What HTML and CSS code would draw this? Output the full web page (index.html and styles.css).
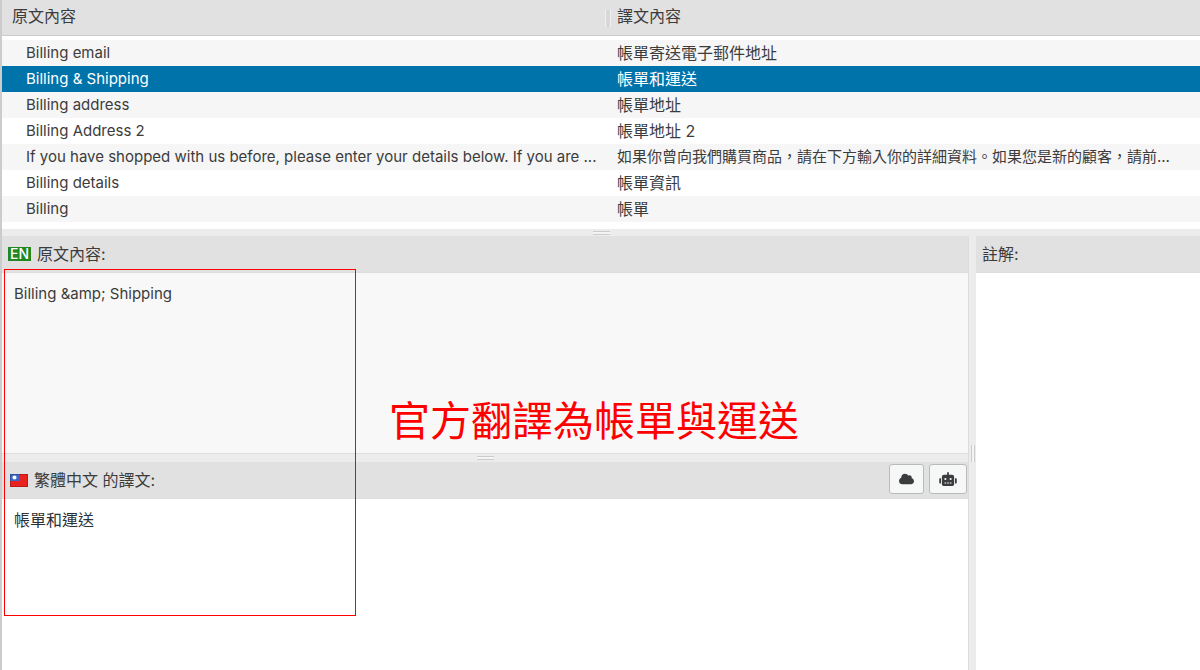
FILE: index.html
```html
<!DOCTYPE html>
<html lang="zh-Hant">
<head>
    <meta charset="utf-8">
    <title>Billing &amp; Shipping</title>
    <link rel="stylesheet" href="styles.css">
</head>
<body>
    <div class="editor">
        <table class="strings">
            <thead>
                <tr><th class="col-source">原文內容</th><th class="col-target">譯文內容</th></tr>
            </thead>
            <tbody>
                <tr><td>Billing email</td><td>帳單寄送電子郵件地址</td></tr>
                <tr class="selected"><td>Billing &amp; Shipping</td><td>帳單和運送</td></tr>
                <tr><td>Billing address</td><td>帳單地址</td></tr>
                <tr><td>Billing Address 2</td><td>帳單地址 2</td></tr>
                <tr class="long"><td>If you have shopped with us before, please enter your details below. If you are ...</td><td>如果你曾向我們購買商品，請在下方輸入你的詳細資料。如果您是新的顧客，請前...</td></tr>
                <tr><td>Billing details</td><td>帳單資訊</td></tr>
                <tr><td>Billing</td><td>帳單</td></tr>
            </tbody>
        </table>

        <div class="split-h"><span class="grip"></span></div>

        <div class="panes">
            <div class="left">
                <div class="panel source">
                    <div class="bar">
                        <span class="lang">EN</span>
                        <label for="source">原文內容:</label>
                    </div>
                    <textarea id="source" readonly>Billing &amp;amp; Shipping</textarea>
                </div>
                <div class="split-h split-inner"><span class="grip"></span></div>
                <div class="panel">
                    <div class="bar bar-target">
                        <svg class="flag" viewBox="0 0 18 13" width="18" height="13">
                            <rect width="18" height="13" fill="#e8221f"/>
                            <rect width="9" height="7" fill="#3f66c8"/>
                            <circle cx="4.5" cy="3.5" r="2" fill="#fff"/>
                            <rect x=".5" y=".5" width="17" height="12" fill="none" stroke="#000" stroke-opacity=".2"/>
                        </svg>
                        <label for="target">繁體中文 的譯文:</label>
                        <div class="tools">
                            <button type="button" aria-label="Sync">
                                <svg viewBox="0 0 640 512" width="15" height="12"><path d="M537.6 226.6c4.1-10.7 6.4-22.4 6.4-34.6 0-53-43-96-96-96-19.7 0-38.1 6-53.3 16.2C367 64.2 315.3 32 256 32c-88.4 0-160 71.6-160 160 0 2.7.1 5.4.2 8.1C40.2 219.8 0 273.2 0 336c0 79.5 64.5 144 144 144h368c70.7 0 128-57.3 128-128 0-61.9-44-113.6-102.4-125.4z"/></svg>
                            </button>
                            <button type="button" aria-label="Auto">
                                <svg viewBox="0 0 640 512" width="18" height="14"><path d="M32 224H64V416H32A32 32 0 0 1 0 384V256A32 32 0 0 1 32 224Zm512-48V448a64 64 0 0 1-64 64H160a64 64 0 0 1-64-64V176a80 80 0 0 1 80-80H288V32a32 32 0 0 1 64 0V96H464A80 80 0 0 1 544 176ZM264 256a40 40 0 1 0-40 40A40 40 0 0 0 264 256Zm-8 128H192v32h64Zm96 0H288v32h64ZM456 256a40 40 0 1 0-40 40A40 40 0 0 0 456 256Zm-8 128H384v32h64ZM640 256V384a32 32 0 0 1-32 32H576V224h32A32 32 0 0 1 640 256Z"/></svg>
                            </button>
                        </div>
                    </div>
                    <textarea id="target">帳單和運送</textarea>
                </div>
            </div>
            <div class="split-v"><span class="grip"></span></div>
            <div class="panel notes">
                <div class="bar"><label for="notes">註解:</label></div>
                <textarea id="notes"></textarea>
            </div>

            <div class="mark"></div>
            <p class="remark">官方翻譯為帳單與運送</p>
        </div>
    </div>
</body>
</html>
```

FILE: styles.css
```css
* {
    box-sizing: border-box;
}
body {
    margin: 0;
    font: 16px/26px Inter, "Noto Sans CJK TC", sans-serif;
    color: #3c3c3c;
}
.editor {
    display: flex;
    flex-direction: column;
    height: 100vh;
    border-left: 2px solid #ccc;
    background: #fff;
}

/* string list */
.strings {
    width: 100%;
    table-layout: fixed;
    border-collapse: separate;
    border-spacing: 0;
    margin-bottom: 7px;
}
.strings th {
    height: 36px;
    padding: 0 0 4px 10px;
    background: #e1e1e1;
    border-bottom: 1px solid #ccc;
    font-weight: 400;
    text-align: left;
    line-height: 30px;
}
.strings .col-source {
    width: 51%;
}
.strings .col-target {
    padding-left: 4px;
}
.strings .col-target::before {
    content: "";
    float: left;
    width: 4px;
    height: 17px;
    margin: 9px 0 0 -12px;
    border: solid #f0f0f0;
    border-width: 0 1px;
    background: #d8d8d8;
}
.strings tbody::before {
    content: "";
    display: block;
    height: 4px;
}
.strings td {
    height: 26px;
    padding: 0 4px;
    overflow: hidden;
    white-space: nowrap;
    line-height: 26px;
}
.strings td:first-child {
    padding: 0 0 0 24px;
    font-size: 15px;
}
.strings .long td {
    font-size: 15px;
}
.strings tbody tr:nth-child(odd) {
    background: #f6f6f6;
}
.strings tbody tr.selected {
    background: #0073aa;
    color: #fff;
}

/* splitters */
.split-h,
.split-v {
    display: flex;
    flex: none;
    align-items: center;
    justify-content: center;
    background: #ececec;
}
.split-h {
    height: 7px;
}
.split-inner {
    height: 9px;
    border-top: 1px solid #ddd;
}
.split-v {
    width: 8px;
    border-left: 1px solid #ddd;
}
.split-h .grip {
    width: 17px;
    height: 4px;
    border: solid #ccc;
    border-width: 1px 0;
    background: #f4f4f4;
}
.split-v .grip {
    width: 4px;
    height: 17px;
    border: solid #ccc;
    border-width: 0 1px;
    background: #f4f4f4;
}

/* panes */
.panes {
    position: relative;
    display: flex;
    flex: 1;
    min-height: 0;
}
.left {
    display: flex;
    flex: 966;
    flex-direction: column;
    min-width: 0;
}
.panel {
    display: flex;
    flex: 1;
    flex-direction: column;
    min-width: 0;
    min-height: 0;
}
.source {
    flex: none;
    height: 50%;
}
.notes {
    flex: 224;
}
.bar {
    display: flex;
    flex: none;
    align-items: center;
    gap: 6px;
    height: 37px;
    padding: 0 1px 0 6px;
    background: #e1e1e1;
    border-bottom: 1px solid #ddd;
}
.bar-target {
    padding-left: 8px;
}
.lang {
    padding: 0 2px;
    background: #218721;
    color: #fff;
    font-size: 14px;
    font-weight: 500;
    line-height: 14px;
}
.tools {
    display: flex;
    gap: 5px;
    margin: 0 0 2px auto;
}
.tools button {
    display: flex;
    align-items: center;
    height: 30px;
    padding: 0 9px;
    border: 1px solid #bbb;
    border-radius: 3px;
    background: #f6f7f7;
    fill: #3c3c3f;
}
textarea {
    flex: 1;
    min-height: 0;
    width: 100%;
    padding: 8px 12px;
    border: 0;
    outline: 0;
    resize: none;
    background: #fff;
    color: #2c3338;
    font: inherit;
}
.source textarea {
    background: #f8f8f8;
    color: #3c3c3c;
    font-size: 15px;
}

/* red notes over the editor */
.mark {
    position: absolute;
    top: 33px;
    left: 2px;
    width: 352px;
    height: 347px;
    border: 1px solid #f00;
    pointer-events: none;
}
.remark {
    position: absolute;
    top: 155px;
    left: 387px;
    margin: 0;
    color: #f00;
    font-size: 41px;
    line-height: 60px;
    white-space: nowrap;
    pointer-events: none;
}
```
